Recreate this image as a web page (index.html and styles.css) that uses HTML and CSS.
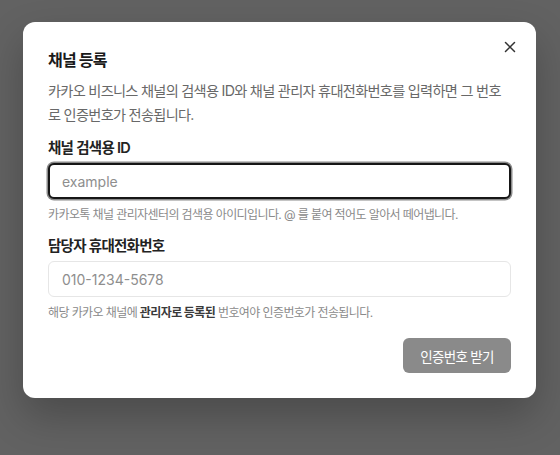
FILE: index.html
```html
<!DOCTYPE html>
<html lang="ko">
<head>
<meta charset="utf-8">
<title>채널 등록</title>
<link rel="stylesheet" href="styles.css">
</head>
<body>
<div class="overlay">
  <div class="modal">
    <button class="close" aria-label="닫기">
      <svg width="12" height="12" viewBox="0 0 12 12"><path d="M1.5 1.5L10.5 10.5M10.5 1.5L1.5 10.5" stroke="#333" stroke-width="1.5" stroke-linecap="round"/></svg>
    </button>
    <h2 class="title">채널 등록</h2>
    <p class="desc">카카오 비즈니스 채널의 검색용 ID와 채널 관리자 휴대전화번호를 입력하면 그 번호로 인증번호가 전송됩니다.</p>
    <div class="field">
      <label class="label">채널 검색용 ID</label>
      <input class="input focused" placeholder="example">
      <p class="help">카카오톡 채널 관리자센터의 검색용 아이디입니다. @ 를 붙여 적어도 알아서 떼어냅니다.</p>
    </div>
    <div class="field">
      <label class="label">담당자 휴대전화번호</label>
      <input class="input" placeholder="010-1234-5678">
      <p class="help">해당 카카오 채널에 <b>관리자로 등록된</b> 번호여야 인증번호가 전송됩니다.</p>
    </div>
    <div class="actions">
      <button class="submit">인증번호 받기</button>
    </div>
  </div>
</div>
</body>
</html>
```

FILE: styles.css
```css
* { box-sizing: border-box; }
html, body { margin: 0; padding: 0; }
body {
  width: 560px;
  height: 455px;
  background: #626262;
  font-family: "Inter", "Noto Sans CJK KR", sans-serif;
  overflow: hidden;
}
.overlay {
  padding: 22px 24px 0 23px;
}
.modal {
  position: relative;
  width: 513px;
  background: #fff;
  border-radius: 12px;
  padding: 26px 25px 25px 25px;
  box-shadow: 0 18px 40px rgba(0,0,0,0.24);
}
.close {
  position: absolute;
  top: 19px;
  right: 20px;
  width: 12px;
  height: 12px;
  padding: 0;
  border: 0;
  background: none;
  display: flex;
}
.title {
  margin: 0 0 7px;
  font-size: 16px;
  line-height: 24px;
  font-weight: 700;
  color: #1a1a1a;
  letter-spacing: -0.05em;
}
.desc {
  margin: 0 0 11px;
  font-size: 14.2px;
  line-height: 24px;
  color: #686868;
  letter-spacing: -0.05em;
}
.field {
  display: flex;
  flex-direction: column;
}
.field + .field { margin-top: 12px; }
.label {
  font-size: 14.5px;
  line-height: 20px;
  font-weight: 600;
  color: #222;
  letter-spacing: -0.05em;
  margin-bottom: 5px;
}
.input {
  height: 36px;
  border: 1px solid #e6e6e6;
  border-radius: 6px;
  padding: 0 13px;
  font-family: "Inter", "Noto Sans CJK KR", sans-serif;
  font-size: 14px;
  color: #222;
  outline: none;
  background: #fff;
}
.input::placeholder { color: #8e8e8e; }
.input.focused {
  border: 2px solid #161616;
  box-shadow: 0 0 0 1.5px #8a8a8a;
  padding: 0 12px;
}
.help {
  margin: 7px 0 0;
  font-size: 12px;
  line-height: 18px;
  color: #8a8a8a;
  letter-spacing: -0.05em;
}
.help b { color: #3a3a3a; font-weight: 700; }
.actions {
  display: flex;
  justify-content: flex-end;
  margin-top: 16px;
}
.submit {
  width: 108px;
  height: 35px;
  border: 0;
  border-radius: 6px;
  background: #8a8a8a;
  color: #fff;
  font-family: "Noto Sans CJK KR", sans-serif;
  font-size: 13.5px;
  letter-spacing: -0.05em;
  padding: 0;
}
```
